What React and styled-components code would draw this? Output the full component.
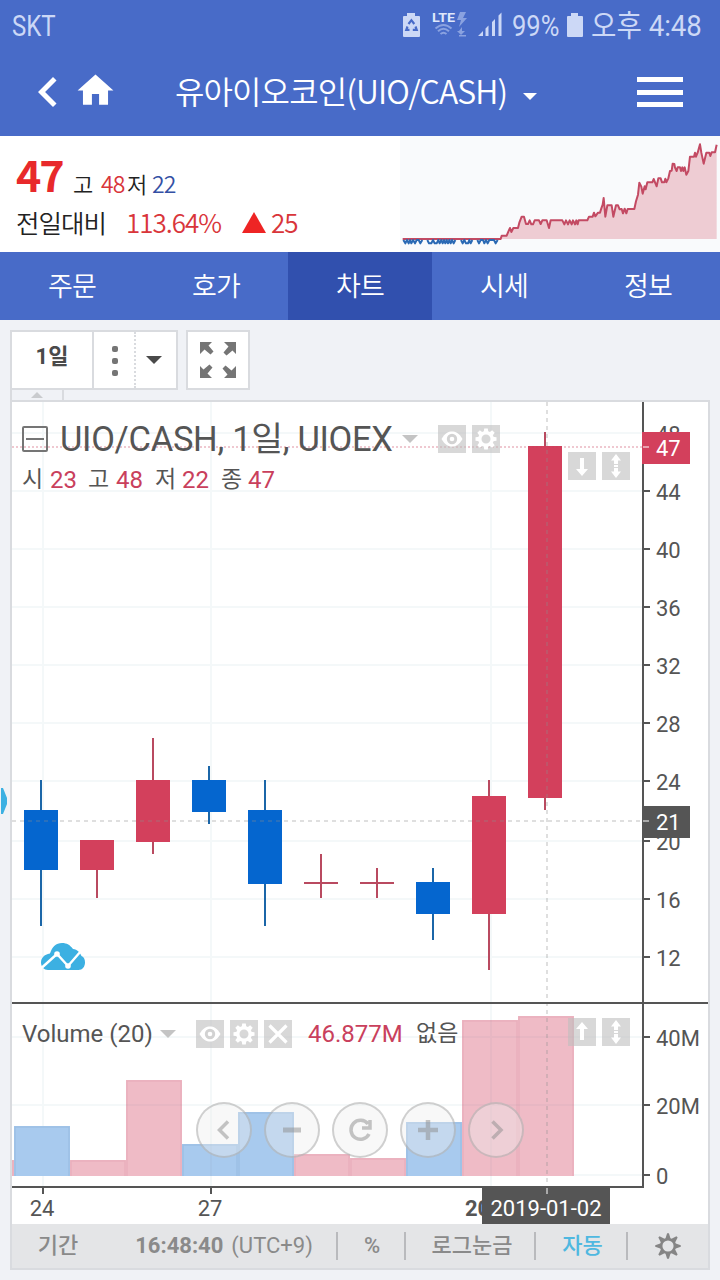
import styled, { createGlobalStyle, css } from "styled-components";

const GlobalStyle = createGlobalStyle`
  * {
    box-sizing: border-box;
  }
  body {
    margin: 0;
    background: #f0f2f6;
  }
`;

const Container = styled.div`
  width: 720px;
  height: 1280px;
  display: flex;
  flex-direction: column;
  overflow: hidden;
  background: #f0f2f6;
  font-family: "Noto Sans CJK KR", sans-serif;
  white-space: nowrap;
`;

// status bar

const StatusBar = styled.div`
  height: 50px;
  padding: 0 17px 0 12px;
  display: flex;
  align-items: center;
  background: #486bc8;
  color: #ccd8f6;
  font-family: Roboto, "Noto Sans CJK KR", sans-serif;
  font-size: 30px;
  line-height: 52px;
`;

const Condensed = styled.span`
  display: block;
  width: ${(props) => props.$width}px;
  height: 50px;
  margin-right: ${(props) => props.$gap || 0}px;
  transform: scaleX(${(props) => props.$scale});
  transform-origin: left center;
`;

const StatusIcons = styled.svg`
  display: block;
  width: 104px;
  height: 50px;
  margin-left: auto;
  margin-right: 6px;
`;

const Battery = styled.svg`
  display: block;
  width: 18px;
  height: 50px;
  margin-right: 7px;
`;

// header

const Header = styled.header`
  height: 86px;
  padding: 0 37px 0 18px;
  display: flex;
  align-items: center;
  background: #486bc8;
  color: #fff;
`;

const BackIcon = styled.svg`
  display: block;
  width: 60px;
  height: 60px;
  margin-top: -3px;
`;

const HomeIcon = styled.svg`
  display: block;
  width: 43px;
  height: 43px;
  margin-top: -6px;
  margin-left: -4px;
`;

const Title = styled.h1`
  margin: 0 0 0 58px;
  width: 348px;
  height: 86px;
  font-size: 32px;
  font-weight: 350;
  line-height: 80px;
  letter-spacing: -0.9px;
`;

const Caret = styled.span`
  width: 0;
  height: 0;
  border-left: ${(props) => props.$size}px solid transparent;
  border-right: ${(props) => props.$size}px solid transparent;
  border-top: ${(props) => props.$size}px solid ${(props) => props.$color};
`;

const TitleCaret = styled(Caret)`
  margin-top: 6px;
`;

const MenuButton = styled.div`
  margin-left: auto;
  width: 46px;
  height: 30px;
  margin-top: -2px;
  display: flex;
  flex-direction: column;
  justify-content: space-between;
`;

const MenuLine = styled.span`
  height: 5px;
  background: #fff;
`;

// quote summary

const Quote = styled.section`
  height: 116px;
  display: flex;
  justify-content: space-between;
  background: #fff;
`;

const QuoteInfo = styled.div`
  padding: 9px 0 0 16px;
`;

const QuoteRow = styled.div`
  height: ${(props) => props.$height}px;
  line-height: ${(props) => props.$height}px;
  display: flex;
  align-items: baseline;
  letter-spacing: -1px;
`;

const Price = styled.strong`
  width: 57px;
  font-size: 43px;
  font-weight: 700;
  letter-spacing: -2px;
  color: #e8292b;
`;

const QuoteText = styled.span`
  width: ${(props) => props.$width}px;
  font-size: ${(props) => props.$size}px;
  font-weight: 350;
  color: ${(props) => props.$color || "#222"};
`;

const LowHigh = styled.div`
  display: flex;
  align-items: baseline;
  position: relative;
  top: 1px;
`;

const UpMark = styled.span`
  width: 0;
  height: 0;
  margin-right: 5px;
  border-left: 12px solid transparent;
  border-right: 12px solid transparent;
  border-bottom: 21px solid #ee2424;
`;

const MiniChart = styled.svg`
  display: block;
  width: 320px;
  height: 116px;
  background: #f9fafc;
`;

// tabs

const Tabs = styled.nav`
  height: 68px;
  display: grid;
  grid-template-columns: repeat(5, 1fr);
  background: #486bc8;
`;

const Tab = styled.div`
  text-align: center;
  line-height: 66px;
  font-size: 27px;
  font-weight: 350;
  letter-spacing: -0.8px;
  color: #fff;
  background: ${(props) => (props.$active ? "#3150ae" : "transparent")};
`;

// trading widget

const Widget = styled.section`
  position: relative;
  margin: 10px 10px 0;
  height: 940px;
  display: flex;
  flex-direction: column;
  font-family: Roboto, "Noto Sans CJK KR", sans-serif;
  color: #555;
`;

const Toolbar = styled.div`
  display: flex;
  gap: 8px;
  height: 60px;
`;

const ButtonGroup = styled.div`
  display: flex;
  border: 2px solid #d9dbdf;
  background: #fff;
`;

const ToolButton = styled.div`
  width: ${(props) => props.$width}px;
  display: flex;
  align-items: center;
  justify-content: center;
  font-size: 22px;
  font-weight: 700;
  line-height: 50px;
  color: #4a4a4a;
  ${(props) =>
    props.$divider &&
    css`
      border-right: 2px ${props.$divider} #d9dbdf;
    `}
`;

const Interval = styled.span`
  height: 56px;
`;

const Dots = styled.div`
  display: flex;
  flex-direction: column;
  gap: 6px;
  margin: 2px 0 0 2px;

  span {
    width: 6px;
    height: 6px;
    border-radius: 2px;
    background: #757575;
  }
`;

const IntervalCaret = styled(Caret)`
  margin-right: 4px;
`;

const Handle = styled.div`
  width: 54px;
  height: 11px;
  display: flex;
  justify-content: center;
  align-items: center;
  border-left: 2px solid #d9dbdf;
  border-right: 2px solid #d9dbdf;
`;

const HandleMark = styled.span`
  margin-top: -2px;
  border-left: 6px solid transparent;
  border-right: 6px solid transparent;
  border-bottom: 6px solid #c9cbce;
`;

const ChartFrame = styled.div`
  position: relative;
  height: 870px;
  margin-top: -1px;
  border: 2px solid #d9dbdf;
  background: #fff;
`;

const Plot = styled.svg`
  display: block;
  width: 696px;
  height: 822px;
`;

const Legend = styled.div`
  position: absolute;
  left: 10px;
  top: ${(props) => props.$top}px;
`;

const LegendRow = styled.div`
  height: ${(props) => props.$height}px;
  line-height: ${(props) => props.$height}px;
  display: flex;
  align-items: center;
`;

const Collapse = styled.span`
  width: 26px;
  height: 26px;
  margin-right: 12px;
  border: 2px solid #757575;
  border-radius: 2px;
  display: flex;
  align-items: center;
  justify-content: center;

  &::after {
    content: "";
    width: 18px;
    height: 2px;
    background: #757575;
  }
`;

const Symbol = styled.span`
  width: 342px;
  font-size: 34.5px;
  letter-spacing: -0.3px;
`;

const Field = styled.span`
  width: ${(props) => props.$width}px;
  font-size: ${(props) => (props.$value ? 24 : 23)}px;
  color: ${(props) => (props.$value ? "#c9405c" : "#555")};
`;

const StudyName = styled(Field)`
  font-size: 24px;
`;

const IconRow = styled.div`
  display: flex;
  gap: 6px;
  margin-left: ${(props) => props.$left || 0}px;
`;

const PaneButtons = styled(IconRow)`
  position: absolute;
  left: 556px;
  top: ${(props) => props.$top}px;
`;

const IconBox = styled.svg`
  display: block;
  width: 28px;
  height: 28px;
  background: rgba(190, 190, 190, 0.6);
`;

const Controls = styled.div`
  position: absolute;
  left: 184px;
  top: 700px;
  display: flex;
  gap: 12px;
`;

const RoundButton = styled.svg`
  display: block;
  width: 56px;
  height: 56px;
  border: 2px solid rgba(150, 150, 150, 0.42);
  border-radius: 50%;
  background: rgba(238, 238, 238, 0.4);
  stroke: rgba(140, 140, 140, 0.5);
  fill: none;
`;

const FooterBar = styled.div`
  height: 44px;
  display: flex;
  align-items: center;
  background: #e4e5e7;
  font-size: 22px;
  line-height: 38px;
  color: #8a8a8a;
`;

const FooterItem = styled.div`
  width: ${(props) => props.$width}px;
  height: 42px;
  display: flex;
  align-items: center;
  justify-content: center;
  gap: 8px;
  padding-left: ${(props) => props.$indent || 0}px;
  color: ${(props) => (props.$active ? "#4fb8e0" : "inherit")};
  font-weight: ${(props) => (props.$bold ? 500 : 400)};
`;

const Divider = styled.span`
  width: 2px;
  height: 28px;
  background: #b9babd;
`;

const SideHandle = styled.svg`
  position: absolute;
  left: -10px;
  top: 458px;
  width: 8px;
  height: 26px;
`;

const priceTicks = [
  [48, 433],
  [44, 491],
  [40, 549],
  [36, 607],
  [32, 665],
  [28, 723],
  [24, 781],
  [20, 841],
  [16, 899],
  [12, 957],
];

const volumeTicks = [
  ["40M", 1037],
  ["20M", 1105],
  ["0", 1175],
];

// x, wick top, body top, body bottom, wick bottom, up
const candles = [
  [24, 780, 810, 870, 926, false],
  [80, 840, 840, 870, 898, true],
  [136, 738, 780, 842, 854, true],
  [192, 766, 780, 812, 824, false],
  [248, 780, 810, 884, 926, false],
  [304, 854, 882, 884, 898, true],
  [360, 868, 882, 884, 898, true],
  [416, 868, 882, 914, 940, false],
  [472, 780, 796, 914, 970, true],
  [528, 432, 446, 798, 810, true],
];

const volumes = [
  [-42, 1160, true],
  [14, 1126, false],
  [70, 1160, true],
  [126, 1080, true],
  [182, 1144, false],
  [238, 1112, false],
  [294, 1154, true],
  [350, 1158, true],
  [406, 1122, false],
  [462, 1020, true],
  [518, 1016, true],
];

const trend =
  "332,309 335,299 350,299 355,287 360,276 364,288 370,276 384,276 388,260 395,242 402,242 408,264 414,264 419,253 424,265 429,265 434,253 447,253 452,264 457,253 470,253 477,276 482,253 517,253 523,265 528,253 534,265 539,253 545,265 549,253 555,265 559,253 563,265 566,253 592,253 597,242 608,242 612,230 616,241 624,230 630,230 634,217 638,206 641,186 646,242 652,208 665,208 670,242 678,208 684,208 689,220 695,219 699,232 704,218 709,232 713,219 733,219 738,196 744,176 748,140 754,152 758,173 764,151 767,160 772,139 787,139 791,129 800,151 805,127 812,127 816,139 823,139 826,128 829,139 835,127 840,105 845,104 848,83 853,84 855,95 860,105 863,94 870,94 873,105 877,94 880,105 884,94 889,116 895,105 900,62 912,62 915,50 918,62 923,50 930,25 934,50 941,83 949,50 958,50 961,60 965,49 975,49 980,26";

const dips = [
  "40,312 46,322 51,312 56,322 60,312 64,322 69,312 75,322 80,312 86,312 91,322 97,312",
  "112,312 117,322 124,322 129,312 134,322 140,322 145,312 149,322 154,312 158,322 162,312 166,322 170,312 174,322 178,312 182,322 186,312 191,322 196,312",
  "213,312 218,322 223,312 228,322 234,322 238,312 242,322 247,312",
  "262,312 267,322 272,312 279,312 283,322 288,312 293,322 298,312 312,312 317,322 323,312",
];

const gear = [0, 45, 90, 135, 180, 225, 270, 315];

const Eye = () => (
  <IconBox viewBox="0 0 28 28">
    <path
      d="M3.500 14C7 8 10.500 6.500 14 6.500S21 8 24.500 14C21 20 17.500 21.500 14 21.500S7 20 3.500 14z"
      fill="#fff"
    />
    <circle cx="14" cy="14" r="5.200" fill="#d2d2d2" />
    <circle cx="14" cy="14" r="2.300" fill="#fff" />
  </IconBox>
);

const Gear = () => (
  <IconBox viewBox="0 0 28 28">
    <circle cx="14" cy="14" r="6.200" fill="none" stroke="#fff" strokeWidth="3.400" />
    {gear.map((a) => (
      <path key={a} d="M12.200 3.500h3.600l.5 4h-4.600z" fill="#fff" transform={`rotate(${a} 14 14)`} />
    ))}
  </IconBox>
);

const Close = () => (
  <IconBox viewBox="0 0 28 28">
    <path d="M5.500 5.500l17 17M22.500 5.500l-17 17" stroke="#fff" strokeWidth="3.200" />
  </IconBox>
);

const Arrow = ({ up }) => (
  <IconBox viewBox="0 0 28 28">
    <path
      d="M12 6h4v11h4l-6 7-6-7h4z"
      fill="#fff"
      transform={up ? "rotate(180 14 14)" : undefined}
    />
  </IconBox>
);

const Stretch = () => (
  <IconBox viewBox="0 0 28 28">
    <path
      d="M14 2l5 6.500h-3V12h-4V8.500H9zM14 26l5-6.500h-3V16h-4v3.500H9zM12 13h4v2h-4z"
      fill="#fff"
    />
  </IconBox>
);

const StatusBarView = () => (
  <StatusBar>
    <Condensed $width={60} $scale={0.8}>
      SKT
    </Condensed>
    <StatusIcons viewBox="402 0 104 50">
      <path d="M407 13h8v3h4q1 0 1 1v19q0 1-1 1h-15q-1 0-1-1V17q0-1 1-1h3z" fill="#ccd8f6" />
      <path
        d="M408.500 24l2.900-3.800 2.900 3.800M415.500 26.500l1.200 3.300h-3.900M409.500 29.800h-3.200l1.200-3.300"
        fill="none"
        stroke="#486bc8"
        strokeWidth="2.200"
      />
      <text
        x="432"
        y="22"
        fill="#dfe7fb"
        fontFamily="Roboto"
        fontWeight="700"
        fontSize="13"
        textLength="23"
        lengthAdjust="spacingAndGlyphs"
      >
        LTE
      </text>
      <g fill="none" stroke="#8aa2e0" strokeWidth="2">
        <path d="M435.500 28.500q8-7 16 0M438 31.300q5.500-5 11 0M440.500 34q3-2.600 6 0" />
      </g>
      <path
        d="M460 12h6l-3 6h4l-8 9 2-7h-4zM462 27v4h3l-4 4-4-4h2zM459 35h7v1.500h-7z"
        fill="#8aa2e0"
      />
      <path
        d="M478 36l5-5v5zM485.500 28.500l3-3V36h-3zM492 22l3-3v17h-3zM498.500 15.500l3-3V36h-3z"
        fill="#ccd8f6"
      />
    </StatusIcons>
    <Condensed $width={48} $gap={6} $scale={0.85}>
      99%
    </Condensed>
    <Battery viewBox="0 0 18 50">
      <path d="M5 13h7v3h4q1 0 1 1v19q0 1-1 1H2q-1 0-1-1V17q0-1 1-1h3z" fill="#ccd8f6" />
    </Battery>
    <Condensed $width={112} $scale={0.92}>
      오후 4:48
    </Condensed>
  </StatusBar>
);

const HeaderView = () => (
  <Header>
    <BackIcon viewBox="0 0 24 24" fill="#fff">
      <path d="M15.410 7.410L14 6l-6 6 6 6 1.410-1.410L10.830 12z" />
    </BackIcon>
    <HomeIcon viewBox="0 0 24 24" fill="#fff">
      <path d="M10 20v-6h4v6h5v-8h3L12 3 2 12h3v8z" />
    </HomeIcon>
    <Title>유아이오코인(UIO/CASH)</Title>
    <TitleCaret $size={7} $color="#fff" />
    <MenuButton>
      <MenuLine />
      <MenuLine />
      <MenuLine />
    </MenuButton>
  </Header>
);

const QuoteView = () => (
  <Quote>
    <QuoteInfo>
      <QuoteRow $height={57}>
        <Price>47</Price>
        <LowHigh>
          <QuoteText $width={28} $size={22}>
            고
          </QuoteText>
          <QuoteText $width={26} $size={23} $color="#d9353a">
            48
          </QuoteText>
          <QuoteText $width={25} $size={22}>
            저
          </QuoteText>
          <QuoteText $width={30} $size={23} $color="#3450a4">
            22
          </QuoteText>
        </LowHigh>
      </QuoteRow>
      <QuoteRow $height={40}>
        <QuoteText $width={110} $size={25.5}>
          전일대비
        </QuoteText>
        <QuoteText $width={116} $size={26} $color="#d9353a">
          113.64%
        </QuoteText>
        <UpMark />
        <QuoteText $width={30} $size={26} $color="#d9353a">
          25
        </QuoteText>
      </QuoteRow>
    </QuoteInfo>
    <MiniChart viewBox="30 0 960 348">
      <polygon points={`${trend} 980,309`} fill="#eeccd3" />
      <g fill="none" strokeWidth="6" strokeLinejoin="round">
        <polyline points={`38,309 ${trend}`} stroke="#c34a63" />
        {dips.map((d) => (
          <polyline key={d} points={d} stroke="#2a69b4" />
        ))}
      </g>
    </MiniChart>
  </Quote>
);

const PlotView = () => (
  <Plot viewBox="12 402 696 822" fontFamily='Roboto, "Noto Sans CJK KR", sans-serif' fontSize="22">
    <g stroke="#f4f8f9" strokeWidth="2">
      {[...priceTicks, ...volumeTicks].map(([label, y]) => (
        <path key={label} d={`M12 ${y}H642`} />
      ))}
      {[43, 211, 491].map((x) => (
        <path key={x} d={`M${x} 402V1186`} />
      ))}
    </g>

    {volumes.map(([x, y, up]) => (
      <g key={x}>
        <path d={`M${x} ${y}h56V1176h-56z`} fill={up ? "#efbbc6" : "#a8caee"} />
        <path
          d={`M${x + 1} 1176V${y + 1}h54V1176`}
          fill="none"
          stroke={up ? "#e6a9b6" : "#94b9dd"}
          strokeWidth="1.500"
          opacity="0.6"
        />
      </g>
    ))}
    <g stroke="#8090a0" strokeOpacity="0.07" strokeWidth="2">
      <path d="M211 1144V1176M491 1020V1176M462 1037H574M126 1105H182M462 1105H574" />
    </g>

    {candles.map(([x, high, top, bottom, low, up]) => (
      <g key={x}>
        <path d={`M${x + 17} ${high}V${low}`} stroke={up ? "#b94a60" : "#1b66a8"} strokeWidth="2" />
        <path
          d={`M${x} ${top}h34V${bottom}h-34z`}
          fill={up ? (bottom - top > 2 ? "#d3405c" : "#b94a60") : "#0566cf"}
        />
      </g>
    ))}

    <path d="M12 447H642" stroke="#c9405c" strokeOpacity="0.38" strokeWidth="1.500" strokeDasharray="2 2" />
    <g stroke="#8c8c8c" strokeOpacity="0.28" strokeWidth="2" strokeDasharray="4 4">
      <path d="M12 821H642M547 402V1186" />
    </g>

    <g stroke="#555" strokeWidth="2">
      <path d="M643 402V1188M12 1003H708M12 1187H644M43 1187v7M211 1187v7" />
      {[...priceTicks, ...volumeTicks].map(([label, y]) => (
        <path key={label} d={`M643 ${y}h7`} />
      ))}
    </g>

    <g fill="#555">
      {[...priceTicks, ...volumeTicks].map(([label, y]) => (
        <text key={label} x="656" y={y + 9}>
          {label}
        </text>
      ))}
      <text x="42" y="1216" textAnchor="middle">
        24
      </text>
      <text x="210" y="1216" textAnchor="middle">
        27
      </text>
      <text x="465" y="1216" fontWeight="700">
        2019
      </text>
    </g>

    <path d="M642 432h48v32h-48z" fill="#d3405c" />
    <path d="M642 806h48v32h-48z" fill="#555" />
    <path d="M482 1188h128v36h-128z" fill="#555" />
    <path d="M643 447h6M643 821h6M547 1188v6" stroke="#fff" strokeOpacity="0.5" strokeWidth="2" />
    <g fill="#fff">
      <text x="656" y="456">
        47
      </text>
      <text x="656" y="830">
        21
      </text>
      <text x="546" y="1216" textAnchor="middle">
        2019-01-02
      </text>
    </g>

    <g transform="translate(41 943)">
      <path
        d="M7 27C3 27 0 23.500 0 19.500c0-4.500 3-8 9-9C11 4 15 0 21 0c5 0 8 2 11 6 2 .3 4 1 6 3 1 1 1.500 2 2.500 4 2.500 1 3.500 3.500 3.500 6.500 0 4-2.500 7.500-6.500 7.500z"
        fill="#3cb0e2"
      />
      <path d="M1 24.500L16 11l11 12L40 8" fill="none" stroke="#fff" strokeWidth="2.400" />
      <circle cx="16" cy="11" r="2.800" fill="#fff" />
      <circle cx="27" cy="23" r="2.800" fill="#fff" />
    </g>
  </Plot>
);

const App = () => {
  return (
    <Container>
      <GlobalStyle />
      <StatusBarView />
      <HeaderView />
      <QuoteView />
      <Tabs>
        {["주문", "호가", "차트", "시세", "정보"].map((name) => (
          <Tab key={name} $active={name === "차트"}>
            {name}
          </Tab>
        ))}
      </Tabs>

      <Widget>
        <Toolbar>
          <ButtonGroup>
            <ToolButton $width={82} $divider="solid">
              <Interval>1일</Interval>
            </ToolButton>
            <ToolButton $width={42} $divider="dotted">
              <Dots>
                <span />
                <span />
                <span />
              </Dots>
            </ToolButton>
            <ToolButton $width={40}>
              <IntervalCaret $size={8} $color="#4a4a4a" />
            </ToolButton>
          </ButtonGroup>
          <ButtonGroup>
            <ToolButton $width={60}>
              <svg width="36" height="36" viewBox="0 0 36 36">
                {[0, 90, 180, 270].map((a) => (
                  <path
                    key={a}
                    d="M0 0h12L8.500 3.500 13.500 9.500 10.500 12.500 4.500 7.500 0 12z"
                    fill="#757575"
                    transform={`rotate(${a} 18 18)`}
                  />
                ))}
              </svg>
            </ToolButton>
          </ButtonGroup>
        </Toolbar>
        <Handle>
          <HandleMark />
        </Handle>

        <ChartFrame>
          <PlotView />

          <Legend $top={14}>
            <LegendRow $height={46}>
              <Collapse />
              <Symbol>UIO/CASH, 1일, UIOEX</Symbol>
              <Caret $size={8} $color="#c4c4c4" />
              <IconRow $left={20}>
                <Eye />
                <Gear />
              </IconRow>
            </LegendRow>
            <LegendRow $height={36}>
              <Field $width={28}>시</Field>
              <Field $width={38} $value>
                23
              </Field>
              <Field $width={28}>고</Field>
              <Field $width={39} $value>
                48
              </Field>
              <Field $width={27}>저</Field>
              <Field $width={39} $value>
                22
              </Field>
              <Field $width={27}>종</Field>
              <Field $width={38} $value>
                47
              </Field>
            </LegendRow>
          </Legend>
          <PaneButtons $top={50}>
            <Arrow />
            <Stretch />
          </PaneButtons>

          <Legend $top={615}>
            <LegendRow $height={34}>
              <StudyName $width={138}>Volume (20)</StudyName>
              <Caret $size={8} $color="#c4c4c4" />
              <IconRow $left={20}>
                <Eye />
                <Gear />
                <Close />
              </IconRow>
              <IconRow $left={16}>
                <Field $width={102} $value>
                  46.877M
                </Field>
                <Field $width={50}>없음</Field>
              </IconRow>
            </LegendRow>
          </Legend>
          <PaneButtons $top={616}>
            <Arrow up />
            <Stretch />
          </PaneButtons>

          <Controls>
            <RoundButton viewBox="0 0 52 52" strokeWidth="3.500">
              <path d="M30 17.500L21.500 26 30 34.500" />
            </RoundButton>
            <RoundButton viewBox="0 0 52 52" strokeWidth="5">
              <path d="M17 26h18" />
            </RoundButton>
            <RoundButton viewBox="0 0 52 52" strokeWidth="3.500">
              <path d="M34 20a9.500 9.500 0 1 0 1 10M36 16v8h-8" />
            </RoundButton>
            <RoundButton viewBox="0 0 52 52" strokeWidth="4.500">
              <path d="M16 26h20M26 16v20" />
            </RoundButton>
            <RoundButton viewBox="0 0 52 52" strokeWidth="3.500">
              <path d="M22.500 17.500L31 26l-8.500 8.500" />
            </RoundButton>
          </Controls>

          <FooterBar>
            <FooterItem $width={92} $bold>
              기간
            </FooterItem>
            <FooterItem $width={232} $indent={8}>
              <b>16:48:40</b>(UTC+9)
            </FooterItem>
            <Divider />
            <FooterItem $width={66} $indent={2} $bold>
              %
            </FooterItem>
            <Divider />
            <FooterItem $width={128} $indent={4} $bold>
              로그눈금
            </FooterItem>
            <Divider />
            <FooterItem $width={90} $indent={3} $active $bold>
              자동
            </FooterItem>
            <Divider />
            <FooterItem $width={80}>
              <svg width="26" height="26" viewBox="0 0 24 24">
                <circle cx="12" cy="12" r="6.300" fill="none" stroke="#858585" strokeWidth="2.300" />
                {gear.map((a) => (
                  <path key={a} d="M11.200 .2h1.600l1.700 5.300h-5z" fill="#858585" transform={`rotate(${a} 12 12)`} />
                ))}
              </svg>
            </FooterItem>
          </FooterBar>
        </ChartFrame>

        <SideHandle viewBox="0 0 8 26">
          <path d="M1 0h2l4 10v6L3 26H1z" fill="#3cb0e2" />
        </SideHandle>
      </Widget>
    </Container>
  );
};

export default App;
